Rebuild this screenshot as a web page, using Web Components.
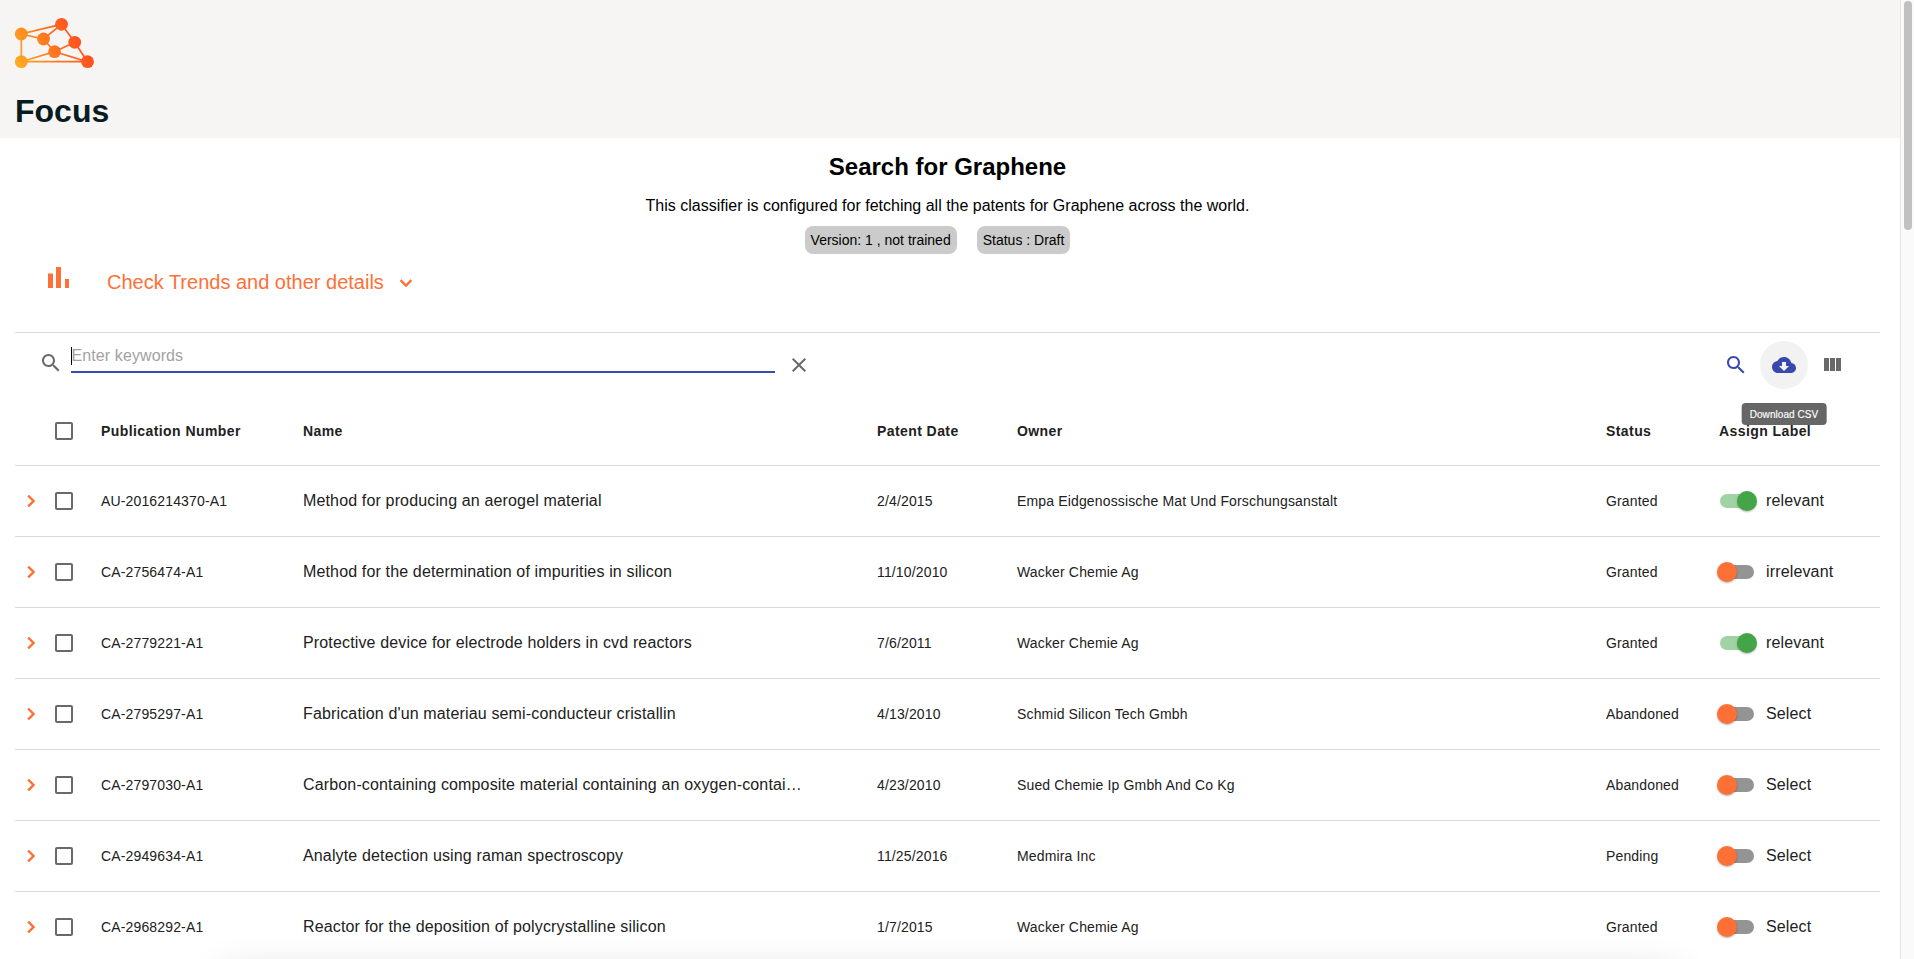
<!DOCTYPE html>
<html lang="en">
<head>
<meta charset="utf-8">
<title>Focus</title>
<style>
html,body{margin:0;height:100%;overflow:hidden;background:#fff;font-family:"Liberation Sans",Arial,sans-serif}
</style>
</head>
<body>
<focus-app></focus-app>
<script>
const define = (name, css, html) => {
  customElements.define(name, class extends HTMLElement {
    constructor() {
      super();
      this.attachShadow({mode: 'open'});
    }
    connectedCallback() {
      this.shadowRoot.innerHTML = `<style>*{box-sizing:border-box}${css}</style>` + (typeof html === 'function' ? html(this) : html);
    }
  });
};

const ICONS = {
  search: 'M15.5 14h-.79l-.28-.27C15.41 12.59 16 11.11 16 9.5 16 5.91 13.09 3 9.5 3S3 5.91 3 9.5 5.91 16 9.5 16c1.61 0 3.09-.59 4.23-1.57l.27.28v.79l5 4.99L20.49 19l-4.99-5zm-6 0C7.01 14 5 11.99 5 9.5S7.01 5 9.5 5 14 7.01 14 9.5 11.99 14 9.5 14z',
  clear: 'M19 6.41L17.59 5 12 10.59 6.41 5 5 6.41 10.59 12 5 17.59 6.41 19 12 13.41 17.59 19 19 17.59 13.41 12z',
  cloud: 'M19.35 10.04C18.67 6.59 15.64 4 12 4 9.11 4 6.6 5.64 5.35 8.04 2.34 8.36 0 10.91 0 14c0 3.31 2.69 6 6 6h13c2.76 0 5-2.24 5-5 0-2.64-2.05-4.78-4.65-4.96zM17 13l-5 5-5-5h3V9h4v4h3z',
  columns: 'M10 18h5V5h-5v13zm-6 0h5V5H4v13zM16 5v13h5V5h-5z',
  right: 'M10 6L8.59 7.41 13.17 12l-4.58 4.59L10 18l6-6z',
  down: 'M16.59 8.59L12 13.17 7.41 8.59 6 10l6 6 6-6z',
  box: 'M19 5v14H5V5h14m0-2H5c-1.1 0-2 .9-2 2v14c0 1.1.9 2 2 2h14c1.1 0 2-.9 2-2V5c0-1.1-.9-2-2-2z'
};
define('ui-icon', ':host{display:block;width:24px;height:24px;flex:none}svg{display:block;fill:currentColor}path{stroke:currentColor;stroke-width:0}:host([bold]) path{stroke-width:.5}',
  el => `<svg width="24" height="24" viewBox="0 0 24 24"><path d="${ICONS[el.getAttribute('name')]}"/></svg>`);

define('brand-header', `
:host{display:block;height:138px;background:#f6f5f3;padding:15px 15px 0}
svg{display:block}
h1{margin:22px 0 0;font-size:32px;line-height:36px;font-weight:700;color:#071b21}`,
`<svg width="84" height="56" viewBox="15 15 84 56">
<defs><linearGradient id="g" gradientUnits="userSpaceOnUse" x1="15" y1="62" x2="78" y2="28"><stop offset="0" stop-color="#ffab24"/><stop offset=".5" stop-color="#ff7b20"/><stop offset="1" stop-color="#ff4b1f"/></linearGradient></defs>
<path fill="none" stroke="url(#g)" stroke-width="1.7" d="M21.3 61.7V34l40.2-9.7L74.7 42.3l12.8 19.4H21.3L54.5 51.7l33 10M21.3 34l22.2 5L61.5 24.3M43.5 39l11 12.7 20.2-9.4"/>
<g fill="url(#g)"><circle cx="21.3" cy="34" r="6.4"/><circle cx="61.5" cy="24.3" r="6.4"/><circle cx="43.5" cy="39" r="6.4"/><circle cx="74.7" cy="42.3" r="6.4"/><circle cx="54.5" cy="51.7" r="6.4"/><circle cx="21.3" cy="61.7" r="6.4"/><circle cx="87.5" cy="61.7" r="6.4"/></g></svg>
<h1><slot></slot></h1>`);

define('info-badge', ':host{display:block;height:28px;line-height:28px;padding:0 6px;border-radius:8px;background:#cbcbcb;font-size:14px;white-space:nowrap}', '<slot></slot>');

define('classifier-summary', `
:host{display:flex;flex-direction:column;align-items:center;padding-top:15px;height:116px;color:#000}
h2{margin:0;font-size:24px;line-height:28px}
p{margin:15px 0 0;font-size:16px;line-height:20px}
div{display:flex;gap:20px;margin-top:10px;transform:translateX(-10px)}`,
`<h2><slot name="title"></slot></h2><p><slot name="text"></slot></p><div><slot></slot></div>`);

define('trends-toggle', `
:host{display:flex;height:78px;padding:13px 0 0 33px;color:#ff7036;font-size:20px;line-height:30px}
svg{display:block;margin-right:38px}
ui-icon{margin:4px 0 0 10px}`,
`<svg width="21" height="21" fill="currentColor"><path d="M0 6.5h5V21H0zM8 0h5v21H8zM17 12h4v9h-4z"/></svg><slot></slot><ui-icon name="down" bold></ui-icon>`);

define('tool-tip', ':host{position:absolute;z-index:2;top:62px;left:50%;transform:translateX(-50%);padding:0 8px;height:22px;line-height:23px;border-radius:4px;background:#666;color:#fff;font-size:10px;font-weight:400;-webkit-text-stroke:.15px #fff;white-space:nowrap;letter-spacing:.07px}', '<slot></slot>');

define('icon-button', ':host{position:relative;display:flex;width:48px;height:48px;align-items:center;justify-content:center;border-radius:50%;color:#696969}:host([primary]){color:#3949ab}:host([hover]){background:#f2f2f2}', '<slot></slot>');

define('search-field', `
:host{display:block;width:704px;height:40px;box-sizing:border-box;padding-top:14px;border-bottom:2px solid #3f48ae;color:#a2a2a2;font-size:16px;line-height:18px;letter-spacing:.1px}
span{display:block;border-left:1px solid #000;text-indent:-.5px}`, '<span><slot></slot></span>');

define('table-toolbar', `
:host{display:flex;align-items:center;box-sizing:border-box;height:65px;border-top:1px solid #dadada;padding:0 24px;color:#696969}
.s{margin-top:-4px;margin-right:8px}
search-field{align-self:flex-start;margin-right:0}
.c{margin-right:auto}`,
`<ui-icon class="s" name="search"></ui-icon><search-field>Enter keywords</search-field><icon-button class="c"><ui-icon name="clear"></ui-icon></icon-button>
<icon-button primary><ui-icon name="search"></ui-icon></icon-button><icon-button primary hover><ui-icon name="cloud"></ui-icon><tool-tip>Download CSV</tool-tip></icon-button><icon-button><ui-icon name="columns"></ui-icon></icon-button>`);

const GRID = 'display:grid;box-sizing:border-box;grid-template-columns:37px 49px 202px 574px 140px 589px 1fr;align-items:center;border-bottom:1px solid #dadada;color:#212121;font-size:14px;letter-spacing:.15px;white-space:nowrap;';

define('label-switch', `
:host{display:flex;align-items:center;font-size:16px}
i{position:relative;display:block;width:34px;height:14px;border-radius:7px;background:#949494;margin:0 12px 0 14px}
b{position:absolute;left:-3px;top:-3px;width:20px;height:20px;border-radius:50%;background:#ff7036;box-shadow:0 1px 2px rgba(0,0,0,.3)}
:host([on]) i{background:#a0d2a3}
:host([on]) b{left:17px;background:#43a547}`, '<i><b></b></i><slot></slot>');

define('table-head', `:host{${GRID}height:69px;font-weight:700;letter-spacing:.42px}ui-icon{color:#696969}.h{display:grid;grid-template-columns:100px 1fr}.l{padding-left:13px}`,
`<span></span><ui-icon name="box"></ui-icon><span>Publication Number</span><span>Name</span><span>Patent Date</span><span>Owner</span><div class="h"><span>Status</span><span class="l">Assign Label</span></div>`);

define('patent-row', `:host{${GRID}height:71px}.r{color:#ff7036;margin-left:4px}.b{color:#696969}.n{font-size:16px}.e{display:grid;grid-template-columns:100px 1fr;align-items:center}`,
el => {
  const a = n => el.getAttribute(n);
  return `<ui-icon class="r" name="right" bold></ui-icon><ui-icon class="b" name="box"></ui-icon><span>${a('pub')}</span><span class="n"><slot></slot></span><span>${a('date')}</span><span>${a('owner')}</span><div class="e"><span>${a('status')}</span><label-switch ${a('label') === 'relevant' ? 'on' : ''}>${a('label')}</label-switch></div>`;
});

define('scroll-rail', ':host{display:block;box-sizing:border-box;width:14px;border-left:1px solid #e4e4e4;background:#fafafa;padding:1px 0 0 3px}div{width:8px;height:229px;border-radius:4px;background:#c1c1c1}', '<div></div>');

define('focus-app', `
:host{display:flex;height:959px;width:1914px;position:relative;overflow:hidden}
brand-header,classifier-summary,trends-toggle{box-sizing:border-box}
main{width:1900px;height:959px;overflow:hidden}
section{padding:0 20px 0 15px}
.shade{position:absolute;left:222px;top:976px;width:1456px;height:60px;box-shadow:0 0 40px 0 rgba(0,0,0,.2)}`,
`<main><brand-header>Focus</brand-header><section>
<classifier-summary><span slot="title">Search for Graphene</span><span slot="text">This classifier is configured for fetching all the patents for Graphene across the world.</span><info-badge>Version: 1 , not trained</info-badge><info-badge>Status : Draft</info-badge></classifier-summary>
<trends-toggle>Check Trends and other details</trends-toggle>
<table-toolbar></table-toolbar>
<table-head></table-head>
<patent-row pub="AU-2016214370-A1" date="2/4/2015" owner="Empa Eidgenossische Mat Und Forschungsanstalt" status="Granted" label="relevant">Method for producing an aerogel material</patent-row>
<patent-row pub="CA-2756474-A1" date="11/10/2010" owner="Wacker Chemie Ag" status="Granted" label="irrelevant">Method for the determination of impurities in silicon</patent-row>
<patent-row pub="CA-2779221-A1" date="7/6/2011" owner="Wacker Chemie Ag" status="Granted" label="relevant">Protective device for electrode holders in cvd reactors</patent-row>
<patent-row pub="CA-2795297-A1" date="4/13/2010" owner="Schmid Silicon Tech Gmbh" status="Abandoned" label="Select">Fabrication d'un materiau semi-conducteur cristallin</patent-row>
<patent-row pub="CA-2797030-A1" date="4/23/2010" owner="Sued Chemie Ip Gmbh And Co Kg" status="Abandoned" label="Select">Carbon-containing composite material containing an oxygen-contai…</patent-row>
<patent-row pub="CA-2949634-A1" date="11/25/2016" owner="Medmira Inc" status="Pending" label="Select">Analyte detection using raman spectroscopy</patent-row>
<patent-row pub="CA-2968292-A1" date="1/7/2015" owner="Wacker Chemie Ag" status="Granted" label="Select">Reactor for the deposition of polycrystalline silicon</patent-row>
</section></main><scroll-rail></scroll-rail><div class="shade"></div>`);
</script>
</body>
</html>
